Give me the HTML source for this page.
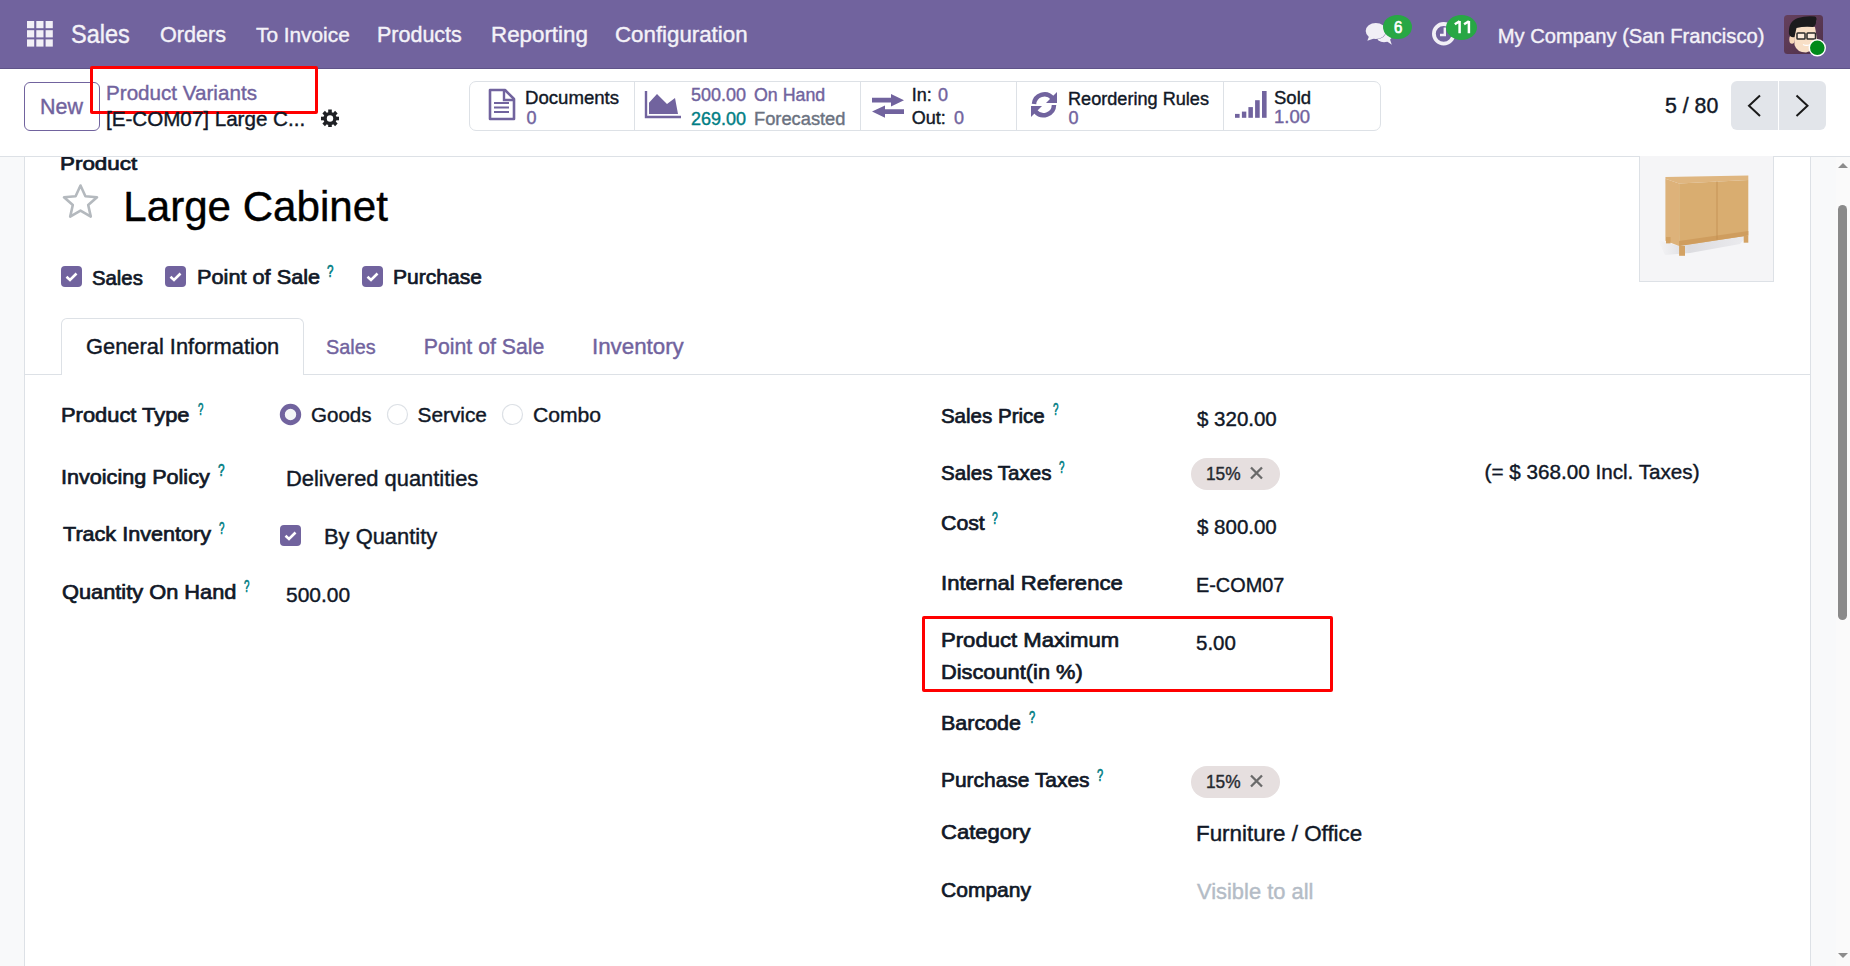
<!DOCTYPE html>
<html><head><meta charset="utf-8"><title>Large Cabinet</title><style>
html,body{margin:0;padding:0;}
body{width:1850px;height:966px;overflow:hidden;position:relative;background:#ffffff;font-family:"Liberation Sans",sans-serif;}
.t{position:absolute;white-space:nowrap;line-height:1;transform-origin:0 0;}
.a{position:absolute;}
</style></head><body>
<div class="a" style="left:0px;top:0px;width:1850px;height:68px;background:#71639e;"></div>
<div class="a" style="left:0px;top:68px;width:1850px;height:1px;background:#5f5389;"></div>
<div class="a" style="left:0px;top:69px;width:1850px;height:87px;background:#ffffff;"></div>
<div class="a" style="left:0px;top:156px;width:1850px;height:1px;background:#dde1e6;"></div>
<div class="a" style="left:0px;top:157px;width:1850px;height:809px;background:#f8f9fa;"></div>
<div class="a" style="left:24px;top:157px;width:1787px;height:809px;background:#ffffff;border-left:1px solid #dde1e6;border-right:1px solid #dde1e6;box-sizing:border-box;"></div>
<div class="a" style="left:1836px;top:157px;width:14px;height:809px;background:#fafafa;"></div>
<div class="a" style="left:1838px;top:205px;width:9px;height:415px;background:#8a8a8a;border-radius:4.5px;"></div>
<svg class="a" style="left:1837px;top:160px" width="12" height="10" viewBox="0 0 12 10"><path d="M1 8 L6 3 L11 8 Z" fill="#8c8c8c"/></svg>
<svg class="a" style="left:1837px;top:951px" width="12" height="10" viewBox="0 0 12 10"><path d="M1 2 L6 7 L11 2 Z" fill="#8c8c8c"/></svg>
<svg class="a" style="left:27px;top:21px" width="27" height="27" viewBox="0 0 27 27"><rect x="0.0" y="0.0" width="7.2" height="7.2" fill="#f1eff6"/><rect x="0.0" y="9.2" width="7.2" height="7.2" fill="#f1eff6"/><rect x="0.0" y="18.4" width="7.2" height="7.2" fill="#f1eff6"/><rect x="9.3" y="0.0" width="7.2" height="7.2" fill="#f1eff6"/><rect x="9.3" y="9.2" width="7.2" height="7.2" fill="#f1eff6"/><rect x="9.3" y="18.4" width="7.2" height="7.2" fill="#f1eff6"/><rect x="18.6" y="0.0" width="7.2" height="7.2" fill="#f1eff6"/><rect x="18.6" y="9.2" width="7.2" height="7.2" fill="#f1eff6"/><rect x="18.6" y="18.4" width="7.2" height="7.2" fill="#f1eff6"/></svg>
<svg class="a" style="left:1364px;top:22px" width="30" height="24" viewBox="0 0 30 24"><ellipse cx="20" cy="13.5" rx="8" ry="6.8" fill="#f1eff6"/><path d="M21 18 L27.8 22.8 L25.5 16 Z" fill="#f1eff6"/><ellipse cx="11.8" cy="9" rx="10.6" ry="8.5" fill="#71639e"/><ellipse cx="11.8" cy="9" rx="10.1" ry="8" fill="#f1eff6"/><path d="M5 14.5 L3.3 18.8 L10 16.5 Z" fill="#f1eff6"/></svg>
<div class="a" style="left:1383px;top:14.6px;width:29px;height:24.5px;background:#28a745;border-radius:50%;"></div>
<svg class="a" style="left:1431px;top:21px" width="26" height="26" viewBox="0 0 26 26"><circle cx="12.7" cy="12.8" r="9.8" fill="none" stroke="#f1eff6" stroke-width="3.8"/><path d="M13.8 6.5 V14 H9" fill="none" stroke="#f1eff6" stroke-width="2.4"/></svg>
<div class="a" style="left:1446.3px;top:14.8px;width:31px;height:25px;background:#28a745;border-radius:50%;"></div>
<svg class="a" style="left:1452px;top:20px" width="20" height="15" viewBox="0 0 20 15"><path d="M7.6 1 V13.2 M7.6 1.2 L2.8 4.2 M16.9 1 V13.2 M16.9 1.2 L12.1 4.2" fill="none" stroke="#ffffff" stroke-width="2.5"/></svg>
<svg class="a" style="left:1784px;top:15px" width="39" height="39" viewBox="0 0 39 39"><defs><linearGradient id="av" x1="0" y1="0" x2="1" y2="1"><stop offset="0" stop-color="#65405d"/><stop offset="1" stop-color="#4f3049"/></linearGradient></defs>
<rect x="0" y="0" width="39" height="39" rx="3.5" fill="url(#av)"/>
<ellipse cx="8" cy="24.5" rx="2.7" ry="4.2" fill="#f5d6b8"/>
<path d="M10 12 Q20 9 31 12 L33 24 Q32 35 22 37.5 Q13 37.5 10.5 30 Z" fill="#f8dfc6"/>
<path d="M5 19 Q4 6 14 3 Q22 0.5 31 1.5 Q33.5 3 32 6 Q32.5 10 29 12 Q20 11 12.5 13 L10.5 22 Q6.5 23 5 19 Z" fill="#1b1b1d"/>
<rect x="13" y="18" width="8" height="6" rx="0.8" fill="#fbeadb" stroke="#2a2a2a" stroke-width="1.5"/><rect x="23" y="18" width="8.5" height="6" rx="0.8" fill="#fbeadb" stroke="#2a2a2a" stroke-width="1.5"/>
<path d="M19 29.5 Q22 31.2 26 29.8" fill="none" stroke="#ffffff" stroke-width="1.2"/></svg>
<svg class="a" style="left:1808px;top:38px" width="19" height="19" viewBox="0 0 19 19"><circle cx="9.3" cy="9.8" r="8.7" fill="#ffffff"/><circle cx="9.3" cy="9.8" r="7.3" fill="#008a1a"/></svg>
<div class="a" style="left:24px;top:82px;width:76px;height:49px;border:1px solid #71639e;border-radius:6px;box-sizing:border-box;"></div>
<svg class="a" style="left:321px;top:109px" width="18" height="18" viewBox="0 0 18 18"><g transform="translate(9,9.5)" fill="#1f2125"><rect x="-1.8" y="-9" width="3.6" height="5" transform="rotate(0)"/><rect x="-1.8" y="-9" width="3.6" height="5" transform="rotate(45)"/><rect x="-1.8" y="-9" width="3.6" height="5" transform="rotate(90)"/><rect x="-1.8" y="-9" width="3.6" height="5" transform="rotate(135)"/><rect x="-1.8" y="-9" width="3.6" height="5" transform="rotate(180)"/><rect x="-1.8" y="-9" width="3.6" height="5" transform="rotate(225)"/><rect x="-1.8" y="-9" width="3.6" height="5" transform="rotate(270)"/><rect x="-1.8" y="-9" width="3.6" height="5" transform="rotate(315)"/><circle r="6.6"/><circle r="3.2" fill="#ffffff"/></g></svg>
<div class="a" style="left:469px;top:81px;width:912px;height:50px;border:1px solid #dde1e6;border-radius:7px;box-sizing:border-box;"></div>
<div class="a" style="left:634px;top:82px;width:1px;height:48px;background:#dde1e6;"></div>
<div class="a" style="left:860px;top:82px;width:1px;height:48px;background:#dde1e6;"></div>
<div class="a" style="left:1016px;top:82px;width:1px;height:48px;background:#dde1e6;"></div>
<div class="a" style="left:1223px;top:82px;width:1px;height:48px;background:#dde1e6;"></div>
<svg class="a" style="left:487px;top:88px" width="30" height="34" viewBox="0 0 30 34"><path d="M3 2 H18 L27 11 V31 H3 Z" fill="none" stroke="#71639e" stroke-width="2.6" stroke-linejoin="round"/><path d="M17 2 V12 H27" fill="none" stroke="#71639e" stroke-width="2.4"/><path d="M7 15 H22 M7 19.5 H22 M7 24 H22" stroke="#71639e" stroke-width="2.2"/></svg>
<svg class="a" style="left:644px;top:90px" width="38" height="30" viewBox="0 0 38 30"><path d="M2 1 V27 H37" fill="none" stroke="#71639e" stroke-width="2.4"/><path d="M5 12.7 L13 4 L23 14 L31 8 L34 24 H5 Z" fill="#71639e"/></svg>
<svg class="a" style="left:871px;top:93px" width="34" height="26" viewBox="0 0 34 26"><path d="M1 4.8 H20 V1 L33 7.2 L20 13.4 V9.6 H1 Z" fill="#71639e"/><path d="M33 16.2 H14 V12.4 L1 18.6 L14 24.8 V21 H33 Z" fill="#71639e"/></svg>
<svg class="a" style="left:1029px;top:90px" width="31" height="30" viewBox="0 0 31 30"><path d="M5 14 A10.5 10.5 0 0 1 23.5 8" fill="none" stroke="#71639e" stroke-width="4.5"/><path d="M28 2 V13 H17 Z" fill="#71639e"/><path d="M25 15 A10.5 10.5 0 0 1 6.5 21.5" fill="none" stroke="#71639e" stroke-width="4.5"/><path d="M2 27 V16 H13 Z" fill="#71639e"/></svg>
<svg class="a" style="left:1234px;top:90px" width="34" height="30" viewBox="0 0 34 30"><rect x="1" y="23.9" width="4.6" height="3.9" fill="#71639e"/><rect x="7.9" y="21.6" width="4.4" height="6.2" fill="#71639e"/><rect x="14.4" y="17.1" width="4.5" height="10.7" fill="#71639e"/><rect x="21.1" y="10.2" width="4.6" height="17.6" fill="#71639e"/><rect x="28" y="1" width="4.6" height="26.8" fill="#71639e"/></svg>
<div class="a" style="left:1731px;top:81px;width:95px;height:49px;background:#e2e5ea;border-radius:6px;"></div>
<div class="a" style="left:1778px;top:81px;width:1px;height:49px;background:#ffffff;"></div>
<svg class="a" style="left:1744px;top:93px" width="20" height="26" viewBox="0 0 20 26"><path d="M16 2.5 L5 12.7 L16 23" fill="none" stroke="#1a1a1a" stroke-width="2"/></svg>
<svg class="a" style="left:1792px;top:93px" width="20" height="26" viewBox="0 0 20 26"><path d="M4.5 2.5 L15.5 12.7 L4.5 23" fill="none" stroke="#1a1a1a" stroke-width="2"/></svg>
<div class="a" style="left:90px;top:66px;width:228px;height:48px;border:3px solid #ff0000;border-radius:2px;box-sizing:border-box;"></div>
<svg class="a" style="left:60px;top:182px" width="41" height="40" viewBox="0 0 41 40"><path d="M20.5 3.5 L25.4 14.2 L37 15.3 L28.2 23 L30.8 34.6 L20.5 28.6 L10.2 34.6 L12.8 23 L4 15.3 L15.6 14.2 Z" fill="none" stroke="#b4b9be" stroke-width="2.6" stroke-linejoin="round"/></svg>
<svg class="a" style="left:61px;top:266px" width="21" height="21" viewBox="0 0 21 21"><rect x="0" y="0" width="21" height="21" rx="4" fill="#71639e"/><path d="M5.5 10.8 L9 14 L15.5 7.5" fill="none" stroke="#ffffff" stroke-width="2.6"/></svg>
<svg class="a" style="left:165px;top:266px" width="21" height="21" viewBox="0 0 21 21"><rect x="0" y="0" width="21" height="21" rx="4" fill="#71639e"/><path d="M5.5 10.8 L9 14 L15.5 7.5" fill="none" stroke="#ffffff" stroke-width="2.6"/></svg>
<svg class="a" style="left:362px;top:266px" width="21" height="21" viewBox="0 0 21 21"><rect x="0" y="0" width="21" height="21" rx="4" fill="#71639e"/><path d="M5.5 10.8 L9 14 L15.5 7.5" fill="none" stroke="#ffffff" stroke-width="2.6"/></svg>
<svg class="a" style="left:280px;top:525px" width="21" height="21" viewBox="0 0 21 21"><rect x="0" y="0" width="21" height="21" rx="4" fill="#71639e"/><path d="M5.5 10.8 L9 14 L15.5 7.5" fill="none" stroke="#ffffff" stroke-width="2.6"/></svg>
<div class="a" style="left:1639px;top:156px;width:135px;height:126px;background:#f5f5f7;border:1px solid #dde1e6;border-top:none;box-sizing:border-box;"></div>
<svg class="a" style="left:1640px;top:156px" width="134" height="126" viewBox="0 0 134 126"><defs><linearGradient id="sh" x1="0" y1="0" x2="1" y2="0"><stop offset="0" stop-color="#f5f5f7"/><stop offset="0.35" stop-color="#dcdce0"/><stop offset="1" stop-color="#ececef"/></linearGradient></defs>
<path d="M18 84 L39 90 L108 79 L100 88 L50 97 L25 99 Z" fill="url(#sh)"/>
<path d="M25.4 20.9 L108.3 19.6 L108.3 24.1 L39.1 27.4 L25.4 22.8 Z" fill="#dfb680"/>
<path d="M25.4 22.8 L39.1 27.4 L39.1 90 L25.4 84.8 Z" fill="#ddb27a"/>
<path d="M39.1 27.4 L108.3 24.1 L108.3 79.6 L39.1 90 Z" fill="#d9ad70"/>
<path d="M39.1 85 L108.3 75 L108.3 79.6 L39.1 90 Z" fill="#cf9d5e"/>
<line x1="77" y1="25.6" x2="77" y2="83.6" stroke="#c08e52" stroke-width="0.8"/>
<path d="M26 81 H30.6 V87.4 H26 Z" fill="#d3a263"/><path d="M39.1 90 H45 V99.8 H39.1 Z" fill="#d3a263"/><path d="M103.7 79.6 H108.3 V86.7 H103.7 Z" fill="#d3a263"/></svg>
<div class="a" style="left:24px;top:374px;width:1786px;height:1px;background:#dde1e6;"></div>
<div class="a" style="left:61px;top:318px;width:243px;height:57px;background:#ffffff;border:1px solid #dde1e6;border-bottom:none;border-radius:6px 6px 0 0;box-sizing:border-box;"></div>
<svg class="a" style="left:279px;top:403px" width="23" height="23" viewBox="0 0 23 23"><circle cx="11.5" cy="11.5" r="8.2" fill="#f4f5f7" stroke="#71639e" stroke-width="5"/></svg>
<svg class="a" style="left:386px;top:403px" width="23" height="23" viewBox="0 0 23 23"><circle cx="11.5" cy="11.5" r="10" fill="#ffffff" stroke="#dde1e6" stroke-width="1.2"/></svg>
<svg class="a" style="left:501px;top:403px" width="23" height="23" viewBox="0 0 23 23"><circle cx="11.5" cy="11.5" r="10" fill="#ffffff" stroke="#dde1e6" stroke-width="1.2"/></svg>
<div class="a" style="left:1191px;top:458px;width:89px;height:32px;background:#e6dfdf;border-radius:16px;"></div>
<svg class="a" style="left:1249px;top:465px" width="16" height="16" viewBox="0 0 16 16"><path d="M2 2.5 L13 13.5 M13 2.5 L2 13.5" stroke="#6a6a6a" stroke-width="2.3"/></svg>
<div class="a" style="left:1191px;top:766px;width:89px;height:32px;background:#e6dfdf;border-radius:16px;"></div>
<svg class="a" style="left:1249px;top:773px" width="16" height="16" viewBox="0 0 16 16"><path d="M2 2.5 L13 13.5 M13 2.5 L2 13.5" stroke="#6a6a6a" stroke-width="2.3"/></svg>
<div class="a" style="left:922px;top:616px;width:411px;height:76px;border:3px solid #ff0000;border-radius:2px;box-sizing:border-box;"></div>
<div class="t" style="left:70.66px;top:22.37px;font-size:24.96px;-webkit-text-stroke-width:0.4px;color:#f4f2f8;transform:scaleX(0.9410);">Sales</div>
<div class="t" style="left:159.69px;top:24.85px;font-size:21.32px;-webkit-text-stroke-width:0.4px;color:#f4f2f8;transform:scaleX(1.0141);">Orders</div>
<div class="t" style="left:255.50px;top:25.41px;font-size:20.66px;-webkit-text-stroke-width:0.4px;color:#f4f2f8;transform:scaleX(1.0076);">To Invoice</div>
<div class="t" style="left:377.29px;top:24.85px;font-size:21.32px;-webkit-text-stroke-width:0.4px;color:#f4f2f8;transform:scaleX(1.0084);">Products</div>
<div class="t" style="left:490.95px;top:24.85px;font-size:21.32px;-webkit-text-stroke-width:0.4px;color:#f4f2f8;transform:scaleX(1.0478);">Reporting</div>
<div class="t" style="left:614.95px;top:24.85px;font-size:21.32px;-webkit-text-stroke-width:0.4px;color:#f4f2f8;transform:scaleX(1.0456);">Configuration</div>
<div class="t" style="left:1497.80px;top:25.83px;font-size:20.17px;-webkit-text-stroke-width:0.4px;color:#f4f2f8;">My Company (San Francisco)</div>
<div class="t" style="left:1393.80px;top:20.49px;font-size:15.84px;-webkit-text-stroke-width:0.7px;color:#ffffff;transform:scaleX(0.9444);">6</div>
<div class="t" style="left:40.29px;top:97.05px;font-size:21.32px;-webkit-text-stroke-width:0.4px;color:#71639e;transform:scaleX(1.0071);">New</div>
<div class="t" style="left:106.00px;top:83.33px;font-size:20.64px;-webkit-text-stroke-width:0.4px;color:#71639e;">Product Variants</div>
<div class="t" style="left:106.00px;top:108.66px;font-size:20.60px;-webkit-text-stroke-width:0.4px;color:#111827;">[E-COM07] Large C...</div>
<div class="t" style="left:525.49px;top:88.84px;font-size:18.50px;-webkit-text-stroke-width:0.4px;color:#111827;transform:scaleX(1.0054);">Documents</div>
<div class="t" style="left:526.50px;top:109.06px;font-size:18.00px;-webkit-text-stroke-width:0.4px;color:#71639e;">0</div>
<div class="t" style="left:691.00px;top:86.46px;font-size:18.00px;-webkit-text-stroke-width:0.4px;color:#71639e;">500.00</div>
<div class="t" style="left:754.01px;top:86.55px;font-size:17.90px;-webkit-text-stroke-width:0.4px;color:#71639e;transform:scaleX(0.9943);">On Hand</div>
<div class="t" style="left:691.00px;top:109.86px;font-size:18.00px;-webkit-text-stroke-width:0.4px;color:#017e84;">269.00</div>
<div class="t" style="left:754.00px;top:109.57px;font-size:18.35px;-webkit-text-stroke-width:0.4px;color:#6b7280;transform:scaleX(0.9967);">Forecasted</div>
<div class="t" style="left:911.80px;top:86.36px;font-size:18.00px;-webkit-text-stroke-width:0.4px;color:#111827;">In:</div>
<div class="t" style="left:938.00px;top:86.36px;font-size:18.00px;-webkit-text-stroke-width:0.4px;color:#71639e;">0</div>
<div class="t" style="left:911.80px;top:109.36px;font-size:18.00px;-webkit-text-stroke-width:0.4px;color:#111827;">Out:</div>
<div class="t" style="left:954.00px;top:109.36px;font-size:18.00px;-webkit-text-stroke-width:0.4px;color:#71639e;">0</div>
<div class="t" style="left:1067.50px;top:89.61px;font-size:18.06px;-webkit-text-stroke-width:0.4px;color:#111827;transform:scaleX(1.0036);">Reordering Rules</div>
<div class="t" style="left:1068.50px;top:108.86px;font-size:18.00px;-webkit-text-stroke-width:0.4px;color:#71639e;">0</div>
<div class="t" style="left:1274.00px;top:89.21px;font-size:18.53px;-webkit-text-stroke-width:0.4px;color:#111827;">Sold</div>
<div class="t" style="left:1274.00px;top:108.41px;font-size:18.53px;-webkit-text-stroke-width:0.4px;color:#71639e;">1.00</div>
<div class="t" style="left:1665.00px;top:96.05px;font-size:21.32px;-webkit-text-stroke-width:0.4px;color:#111827;">5 / 80</div>
<div class="a" style="left:0;top:157px;width:1850px;height:809px;overflow:hidden">
<div class="t" style="left:60.40px;top:-2.15px;font-size:18.72px;-webkit-text-stroke-width:0.7px;color:#111827;transform:scaleX(1.1969);">Product</div>
<div class="t" style="left:123.30px;top:29.45px;font-size:42.11px;-webkit-text-stroke-width:0.4px;color:#000000;">Large Cabinet</div>
<div class="t" style="left:91.59px;top:110.73px;font-size:20.16px;-webkit-text-stroke-width:0.7px;color:#111827;transform:scaleX(1.0082);">Sales</div>
<div class="t" style="left:197.36px;top:110.19px;font-size:20.80px;-webkit-text-stroke-width:0.7px;color:#111827;transform:scaleX(1.0440);">Point of Sale</div>
<div class="t" style="left:392.99px;top:110.19px;font-size:20.80px;-webkit-text-stroke-width:0.7px;color:#111827;transform:scaleX(1.0116);">Purchase</div>
<div class="t" style="left:85.97px;top:179.65px;font-size:21.32px;-webkit-text-stroke-width:0.4px;color:#111827;transform:scaleX(1.0258);">General Information</div>
<div class="t" style="left:326.01px;top:180.80px;font-size:19.97px;-webkit-text-stroke-width:0.4px;color:#71639e;transform:scaleX(0.9939);">Sales</div>
<div class="t" style="left:423.80px;top:179.71px;font-size:21.25px;-webkit-text-stroke-width:0.4px;color:#71639e;">Point of Sale</div>
<div class="t" style="left:591.91px;top:179.65px;font-size:21.32px;-webkit-text-stroke-width:0.4px;color:#71639e;transform:scaleX(1.0465);">Inventory</div>
<div class="t" style="left:61.25px;top:248.29px;font-size:20.80px;-webkit-text-stroke-width:0.7px;color:#111827;transform:scaleX(1.0521);">Product Type</div>
<div class="t" style="left:311.01px;top:248.07px;font-size:20.71px;-webkit-text-stroke-width:0.4px;color:#111827;transform:scaleX(0.9933);">Goods</div>
<div class="t" style="left:417.50px;top:247.96px;font-size:20.84px;-webkit-text-stroke-width:0.4px;color:#111827;">Service</div>
<div class="t" style="left:533.49px;top:247.85px;font-size:20.97px;-webkit-text-stroke-width:0.4px;color:#111827;transform:scaleX(1.0076);">Combo</div>
<div class="t" style="left:61.26px;top:309.89px;font-size:20.80px;-webkit-text-stroke-width:0.7px;color:#111827;transform:scaleX(1.0378);">Invoicing Policy</div>
<div class="t" style="left:285.87px;top:311.85px;font-size:21.32px;-webkit-text-stroke-width:0.4px;color:#111827;transform:scaleX(1.0274);">Delivered quantities</div>
<div class="t" style="left:62.60px;top:367.39px;font-size:20.80px;-webkit-text-stroke-width:0.7px;color:#111827;transform:scaleX(1.0378);">Track Inventory</div>
<div class="t" style="left:323.97px;top:369.55px;font-size:21.32px;-webkit-text-stroke-width:0.4px;color:#111827;transform:scaleX(1.0275);">By Quantity</div>
<div class="t" style="left:61.55px;top:425.09px;font-size:20.80px;-webkit-text-stroke-width:0.7px;color:#111827;transform:scaleX(1.0479);">Quantity On Hand</div>
<div class="t" style="left:285.80px;top:428.31px;font-size:20.90px;-webkit-text-stroke-width:0.4px;color:#111827;transform:scaleX(1.0032);">500.00</div>
<div class="t" style="left:940.90px;top:248.71px;font-size:20.54px;-webkit-text-stroke-width:0.7px;color:#111827;">Sales Price</div>
<div class="t" style="left:1197.00px;top:251.76px;font-size:20.24px;-webkit-text-stroke-width:0.4px;color:#111827;transform:scaleX(1.0128);">$ 320.00</div>
<div class="t" style="left:941.00px;top:305.99px;font-size:20.57px;-webkit-text-stroke-width:0.7px;color:#111827;">Sales Taxes</div>
<div class="t" style="left:1205.85px;top:307.96px;font-size:18.24px;-webkit-text-stroke-width:0.4px;color:#262a30;transform:scaleX(0.9486);">15%</div>
<div class="t" style="left:1484.60px;top:305.20px;font-size:20.67px;-webkit-text-stroke-width:0.4px;color:#111827;">(= $ 368.00 Incl. Taxes)</div>
<div class="t" style="left:940.98px;top:356.49px;font-size:20.80px;-webkit-text-stroke-width:0.7px;color:#111827;transform:scaleX(1.0238);">Cost</div>
<div class="t" style="left:1197.00px;top:360.36px;font-size:20.24px;-webkit-text-stroke-width:0.4px;color:#111827;transform:scaleX(1.0128);">$ 800.00</div>
<div class="t" style="left:941.34px;top:415.89px;font-size:20.80px;-webkit-text-stroke-width:0.7px;color:#111827;transform:scaleX(1.0624);">Internal Reference</div>
<div class="t" style="left:1196.39px;top:419.10px;font-size:19.73px;-webkit-text-stroke-width:0.4px;color:#111827;transform:scaleX(1.0070);">E-COM07</div>
<div class="t" style="left:940.94px;top:473.29px;font-size:20.80px;-webkit-text-stroke-width:0.7px;color:#111827;transform:scaleX(1.0627);">Product Maximum</div>
<div class="t" style="left:940.95px;top:504.69px;font-size:20.80px;-webkit-text-stroke-width:0.7px;color:#111827;transform:scaleX(1.0478);">Discount(in %)</div>
<div class="t" style="left:1196.00px;top:475.75px;font-size:20.50px;-webkit-text-stroke-width:0.4px;color:#111827;">5.00</div>
<div class="t" style="left:940.97px;top:556.19px;font-size:20.80px;-webkit-text-stroke-width:0.7px;color:#111827;transform:scaleX(1.0329);">Barcode</div>
<div class="t" style="left:940.99px;top:613.49px;font-size:20.80px;-webkit-text-stroke-width:0.7px;color:#111827;transform:scaleX(1.0068);">Purchase Taxes</div>
<div class="t" style="left:1205.85px;top:615.66px;font-size:18.24px;-webkit-text-stroke-width:0.4px;color:#262a30;transform:scaleX(0.9486);">15%</div>
<div class="t" style="left:940.94px;top:665.19px;font-size:20.80px;-webkit-text-stroke-width:0.7px;color:#111827;transform:scaleX(1.0595);">Category</div>
<div class="t" style="left:1195.95px;top:667.05px;font-size:21.32px;-webkit-text-stroke-width:0.4px;color:#111827;transform:scaleX(1.0497);">Furniture / Office</div>
<div class="t" style="left:940.99px;top:722.99px;font-size:20.80px;-webkit-text-stroke-width:0.7px;color:#111827;transform:scaleX(1.0114);">Company</div>
<div class="t" style="left:1197.00px;top:725.05px;font-size:21.32px;-webkit-text-stroke-width:0.4px;color:#b4bcc6;transform:scaleX(1.0268);">Visible to all</div>
<div class="t" style="left:327.00px;top:105.99px;font-size:16.32px;-webkit-text-stroke-width:0.7px;color:#017e84;transform:scaleX(0.7111);">?</div>
<div class="t" style="left:197.70px;top:244.29px;font-size:16.32px;-webkit-text-stroke-width:0.7px;color:#017e84;transform:scaleX(0.5889);">?</div>
<div class="t" style="left:218.00px;top:305.09px;font-size:16.32px;-webkit-text-stroke-width:0.7px;color:#017e84;transform:scaleX(0.7222);">?</div>
<div class="t" style="left:219.30px;top:362.99px;font-size:16.32px;-webkit-text-stroke-width:0.7px;color:#017e84;transform:scaleX(0.6000);">?</div>
<div class="t" style="left:244.20px;top:421.29px;font-size:16.32px;-webkit-text-stroke-width:0.7px;color:#017e84;transform:scaleX(0.6000);">?</div>
<div class="t" style="left:1053.20px;top:243.69px;font-size:16.32px;-webkit-text-stroke-width:0.7px;color:#017e84;transform:scaleX(0.6000);">?</div>
<div class="t" style="left:1058.60px;top:302.09px;font-size:16.32px;-webkit-text-stroke-width:0.7px;color:#017e84;transform:scaleX(0.6000);">?</div>
<div class="t" style="left:992.30px;top:352.89px;font-size:16.32px;-webkit-text-stroke-width:0.7px;color:#017e84;transform:scaleX(0.6333);">?</div>
<div class="t" style="left:1028.50px;top:552.19px;font-size:16.32px;-webkit-text-stroke-width:0.7px;color:#017e84;transform:scaleX(0.6778);">?</div>
<div class="t" style="left:1096.60px;top:610.09px;font-size:16.32px;-webkit-text-stroke-width:0.7px;color:#017e84;transform:scaleX(0.6778);">?</div>
</div>
</body></html>
